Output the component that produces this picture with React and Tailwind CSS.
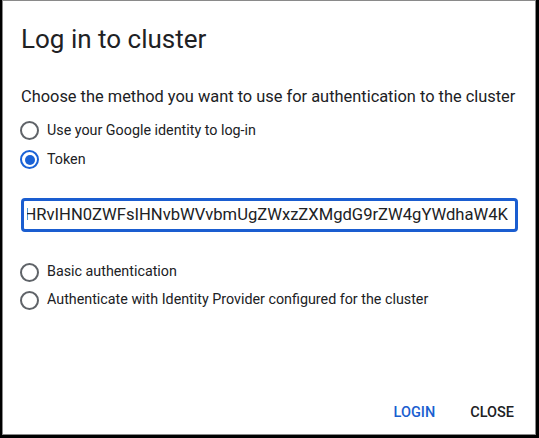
import React from "react";

function Radio({ checked, label, h = "h-[29px]" }) {
  return (
    <div className={"flex items-center " + h}>
      <div className="w-[19px] h-[19px] ml-[17px] mr-[8px] rounded-full border-2 flex items-center justify-center shrink-0 border-[#5f6368] data-[c=true]:border-[#1a62d6]" data-c={checked ? "true" : "false"}>
        {checked && <div className="w-[10px] h-[10px] rounded-full bg-[#1a62d6]" />}
      </div>
      <span className="text-[14.3px] text-[#202124]">{label}</span>
    </div>
  );
}

export default function App() {
  return (
    <div className="w-[539px] h-[438px] bg-black pl-[2px] pt-0 pr-[3px] pb-[3px]" style={{ fontFamily: "Roboto, 'Liberation Sans', sans-serif" }}>
      <div className="w-full h-full bg-white border border-[#8a8a8a] flex flex-col">
        <h1 className="text-[26px] leading-[32px] text-[#202124] ml-[18px] mt-[22px]">Log in to cluster</h1>
        <p className="text-[16.4px] text-[#202124] ml-[18px] mt-[32px] leading-[20px]">Choose the method you want to use for authentication to the cluster</p>
        <div className="mt-[9px] flex flex-col">
          <Radio label="Use your Google identity to log-in" />
          <Radio checked label="Token" />
        </div>
        <div className="ml-[18px] mr-[17px] mt-[24px] h-[34px] rounded-[4px] border-[3px] border-[#1a5dd0] flex items-center pl-[3px] pr-[7px]">
          <div className="flex-1 flex justify-end overflow-hidden">
            <span className="whitespace-nowrap text-[16.6px] text-[#202124]">ZGhpcyBpcyBhIHRvIHN0ZWFsIHNvbWVvbmUgZWxzZXMgdG9rZW4gYWdhaW4K</span>
          </div>
        </div>
        <div className="mt-[26px] flex flex-col">
          <Radio h="h-[28px]" label="Basic authentication" />
          <Radio h="h-[28px]" label="Authenticate with Identity Provider configured for the cluster" />
        </div>
        <div className="mt-auto mb-[10px] flex justify-end items-center gap-[35px] pr-[21px]">
          <span className="text-[14.5px] font-medium text-[#1a5fd0]">LOGIN</span>
          <span className="text-[14.5px] font-medium text-[#202124]">CLOSE</span>
        </div>
      </div>
    </div>
  );
}
